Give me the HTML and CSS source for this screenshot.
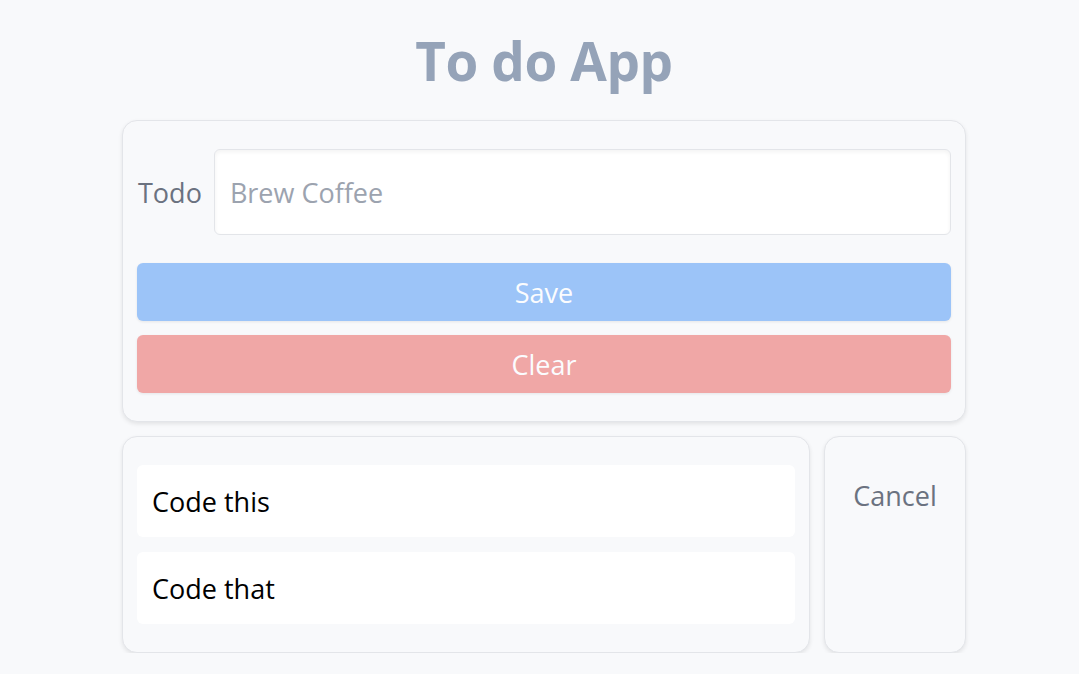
FILE: index.html
```html
<!DOCTYPE html>
<html lang="en">
<head>
<meta charset="utf-8">
<title>To do App</title>
<link rel="stylesheet" href="styles.css">
</head>
<body>
<div class="page">
  <main class="app">
    <h1 class="title">To do App</h1>
    <section class="card form-card">
      <div class="field">
        <label class="label" for="todo">Todo</label>
        <input class="input" id="todo" type="text" placeholder="Brew Coffee">
      </div>
      <button class="btn btn-save" type="button">Save</button>
      <button class="btn btn-clear" type="button">Clear</button>
    </section>
    <div class="lower">
      <section class="card list-card">
        <div class="item">Code this</div>
        <div class="item">Code that</div>
      </section>
      <section class="card side-card">
        <span class="cancel">Cancel</span>
      </section>
    </div>
  </main>
</div>
</body>
</html>
```
FILE: styles.css
```css
* { box-sizing: border-box; }
html, body { margin: 0; padding: 0; }
body {
  background: #f8f9fb;
  font-family: "Open Sans", "Noto Sans", sans-serif;
  color: #111;
}
.page {
  padding-left: 9px;
}
.app {
  width: 844px;
  margin: 0 auto;
}
.title {
  margin: 0;
  padding-top: 25px;
  height: 120px;
  text-align: center;
  font-size: 53px;
  line-height: 72px;
  font-weight: 700;
  color: #95a3b8;
  letter-spacing: -0.4px;
}
.card {
  background: #f8f9fb;
  border: 1px solid #e3e5e9;
  border-radius: 15px;
  box-shadow: 0 2px 4px rgba(0,0,0,0.09);
}
.form-card {
  display: flex;
  flex-direction: column;
  padding: 28px 14px;
}
.field {
  display: flex;
  align-items: center;
  gap: 12px;
  margin-bottom: 28px;
}
.label {
  padding-left: 1px;
  font-size: 27px;
  color: #6b7280;
}
.input {
  flex: 1;
  height: 86px;
  border: 1px solid #e3e5e9;
  border-radius: 6px;
  background: #fff;
  box-shadow: inset 0 2px 4px rgba(0,0,0,0.05);
  padding: 0 15px;
  font-family: inherit;
  font-size: 27px;
  color: #374151;
  outline: none;
}
.input::placeholder { color: #9ca3af; }
.btn {
  display: block;
  width: 100%;
  height: 58px;
  border: 0;
  border-radius: 6px;
  font-family: inherit;
  font-size: 27px;
  color: #fbfcfe;
  box-shadow: 0 1px 3px rgba(0,0,0,0.08);
  cursor: pointer;
}
.btn-save { background: #9cc4f8; margin-bottom: 14px; }
.btn-clear { background: #f0a7a6; }
.lower {
  display: flex;
  gap: 14px;
  margin-top: 14px;
}
.list-card {
  flex: 1;
  height: 217px;
  display: flex;
  flex-direction: column;
  gap: 15px;
  padding: 28px 14px;
}
.item {
  height: 72px;
  flex: none;
  display: flex;
  align-items: center;
  padding-left: 15px;
  background: #fff;
  border-radius: 6px;
  font-size: 27px;
  color: #000;
}
.side-card {
  width: 142px;
  height: 217px;
  display: flex;
  justify-content: center;
  padding-top: 40px;
}
.cancel {
  font-size: 27px;
  line-height: 38px;
  color: #6b7280;
}
```
